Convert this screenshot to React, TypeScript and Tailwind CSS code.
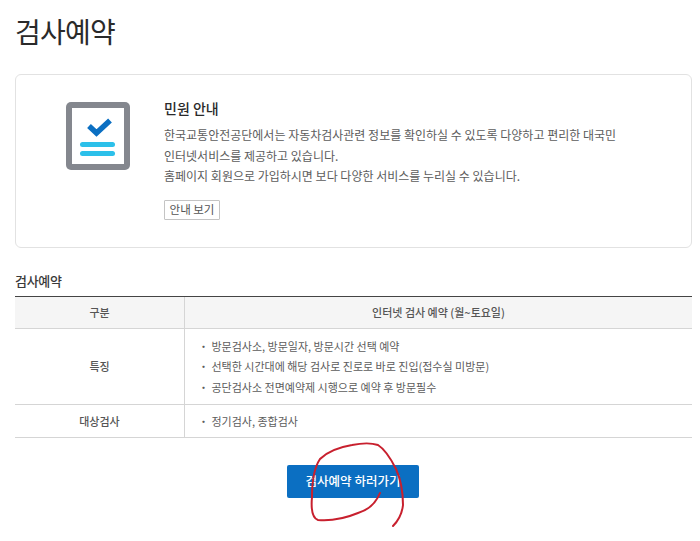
export default function App() {
  return (
    <div className="relative h-[541px] w-[700px] overflow-hidden bg-white pl-[15px] pr-[8px] font-['Noto_Sans_CJK_KR','Noto_Sans',sans-serif] text-[#5c5c5c]">
      <h1 className="pt-[11px] text-[28px] leading-[40px] font-normal tracking-[-0.8px] text-[#2a2a2a]">검사예약</h1>
      <section className="mt-[23px] flex h-[174px] rounded-[6px] border border-[#e2e2e2] pt-[27px] pl-[50px]">
        <svg width="64" height="68" viewBox="0 0 64 68" className="shrink-0">
          <rect x="0" y="0" width="64" height="68" rx="5" fill="#84878e" />
          <rect x="6" y="6" width="52" height="56" fill="#fff" />
          <path d="M23 24 L30.5 31 L44 18.5" fill="none" stroke="#0b6fc2" strokeWidth="5.5" />
          <rect x="14" y="40" width="35" height="5" rx="2.5" fill="#2cc0ea" />
          <rect x="14" y="49" width="35" height="5" rx="2.5" fill="#2cc0ea" />
        </svg>
        <div className="ml-[34px]">
          <h2 className="-mt-[2px] text-[14px] leading-[16px] font-medium text-[#2a2a2a]">민원 안내</h2>
          <p className="mt-[9px] text-[12px] leading-[20.5px] whitespace-nowrap">
            한국교통안전공단에서는 자동차검사관련 정보를 확인하실 수 있도록 다양하고 편리한 대국민
            <br />
            인터넷서비스를 제공하고 있습니다.
            <br />
            홈페이지 회원으로 가입하시면 보다 다양한 서비스를 누리실 수 있습니다.
          </p>
          <button className="mt-[13px] flex h-[20px] w-[56px] items-center justify-center rounded-[1px] border border-[#c4c4c4] text-[11.5px] text-[#555]">안내 보기</button>
        </div>
      </section>
      <h3 className="mt-[24px] text-[13px] leading-[18px] font-medium tracking-[-0.3px] text-[#3a3a3a]">검사예약</h3>
      <div className="mt-[6px] grid grid-cols-[170px_1fr] border-t border-t-[#444] text-[11px]">
        <div className="flex h-[32px] items-center justify-center border-b border-r border-[#d5d5d5] bg-[#f5f5f5] font-medium text-[#555]">구분</div>
        <div className="flex h-[32px] items-center justify-center border-b border-[#d5d5d5] bg-[#f5f5f5] font-medium text-[#555]">인터넷 검사 예약 (월~토요일)</div>
        <div className="flex h-[76px] items-center justify-center border-b border-r border-[#d5d5d5] font-medium text-[#555]">특징</div>
        <ul className="flex h-[76px] flex-col justify-center border-b border-[#d5d5d5] pl-[13px] leading-[20.5px]">
          <li>・ 방문검사소, 방문일자, 방문시간 선택 예약</li>
          <li>・ 선택한 시간대에 해당 검사로 진로로 바로 진입(접수실 미방문)</li>
          <li>・ 공단검사소 전면예약제 시행으로 예약 후 방문필수</li>
        </ul>
        <div className="flex h-[33px] items-center justify-center border-b border-r border-[#d5d5d5] font-medium text-[#555]">대상검사</div>
        <div className="flex h-[33px] items-center border-b border-[#d5d5d5] pl-[13px]">・ 정기검사, 종합검사</div>
      </div>
      <div className="mt-[27px] flex justify-center pr-[1px]">
        <button className="h-[33px] w-[132px] rounded-[2px] bg-[#0b6fc2] text-[12.5px] font-medium text-white">검사예약 하러가기</button>
      </div>
      <svg className="absolute top-0 left-0 pointer-events-none" width="700" height="541" viewBox="0 0 700 541" fill="none">
        <path d="M380 493 C376 503 368 510 358 513 C346 518 330 521 318 520 C312 518 311 508 312 497 C312 482 314 468 320 459 C328 451 340 447 352 445 C362 443 372 443 378 445 C386 450 391 459 396 469 C401 480 403 494 403 505 C402 514 398 521 393 526" stroke="#c8202e" strokeWidth="2" strokeLinecap="round" />
      </svg>
    </div>
  );
}
